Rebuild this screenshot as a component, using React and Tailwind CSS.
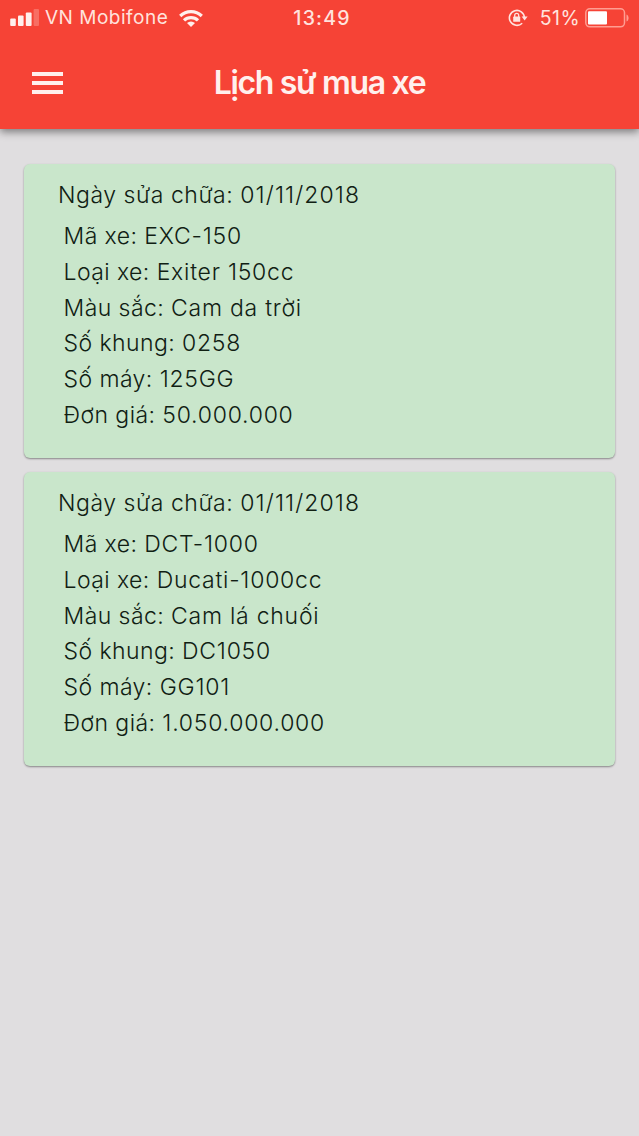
import React from 'react';

const purchases = [
  {
    date: '01/11/2018',
    details: [
      { label: 'Mã xe', value: 'EXC-150' },
      { label: 'Loại xe', value: 'Exiter 150cc' },
      { label: 'Màu sắc', value: 'Cam da trời' },
      { label: 'Số khung', value: '0258' },
      { label: 'Số máy', value: '125GG' },
      { label: 'Đơn giá', value: '50.000.000' },
    ],
  },
  {
    date: '01/11/2018',
    details: [
      { label: 'Mã xe', value: 'DCT-1000' },
      { label: 'Loại xe', value: 'Ducati-1000cc' },
      { label: 'Màu sắc', value: 'Cam lá chuối' },
      { label: 'Số khung', value: 'DC1050' },
      { label: 'Số máy', value: 'GG101' },
      { label: 'Đơn giá', value: '1.050.000.000' },
    ],
  },
];

const SignalIcon = () => (
  <svg className="w-[29px] h-[18px]" viewBox="0 0 29 18" fill="#fff0ed">
    <rect x="0.2" y="9.5" width="5.6" height="7.5" rx="1" />
    <rect x="8" y="6.5" width="5.6" height="10.5" rx="1" />
    <rect x="15.8" y="3.5" width="5.8" height="13.5" rx="1" />
    <rect x="23.6" y="0" width="5.4" height="17" rx="1" opacity="0.25" />
  </svg>
);

const WifiIcon = () => (
  <svg className="w-6 h-[17px]" viewBox="0 0 24 17" fill="none" stroke="#fff0ed" strokeWidth="3.2">
    <path d="M1.2 6a15.6 15.6 0 0 1 21.6 0" />
    <path d="M5 10.4a10 10 0 0 1 14 0" />
    <path d="M12 17l-4-4a6 6 0 0 1 8 0z" fill="#fff0ed" stroke="none" />
  </svg>
);

const RotationLockIcon = () => (
  <svg className="w-5 h-[18px]" viewBox="0 0 20 18" fill="none" stroke="#ffe3de" strokeWidth="1.6">
    <path d="M14.2 14.2a7.5 7.5 0 1 1 2.2-5.6" />
    <path d="M13.6 7.6h6l-3 4z" fill="#ffe3de" stroke="none" />
    <rect x="5.2" y="7.6" width="7" height="5.2" rx="0.6" fill="#ffe3de" stroke="none" />
    <path d="M6.7 8V6.4a2 2 0 0 1 4 0V8" strokeWidth="1.3" />
  </svg>
);

const BatteryIcon = () => (
  <svg className="w-[45px] h-5" viewBox="0 0 45 20" fill="none">
    <rect x="0.8" y="0.8" width="38.7" height="18" rx="4" stroke="#ff9d92" strokeWidth="1.5" />
    <rect x="3" y="3.2" width="19" height="13.2" rx="1" fill="#fff" />
    <path d="M41.5 6.5c2.8 1 2.8 6 0 7z" fill="#ff9d92" />
  </svg>
);

const StatusBar = () => (
  <div className="grid grid-cols-[1fr_auto_1fr] items-center h-9 pl-[10px] pr-[9px] text-[#ffe3de] leading-9">
    <div className="flex items-center">
      <SignalIcon />
      <span className="ml-[6px] text-[19px] tracking-[0.5px] whitespace-nowrap">VN Mobifone</span>
      <span className="ml-[11px]"><WifiIcon /></span>
    </div>
    <span className="pl-1 font-medium tracking-[1.2px] text-[19.5px]">13:49</span>
    <div className="flex items-center justify-end">
      <RotationLockIcon />
      <span className="ml-3 mr-[5px] text-[19.5px] tracking-[0.4px]">51%</span>
      <BatteryIcon />
    </div>
  </div>
);

const PurchaseCard = ({ date, details }) => (
  <div className="h-[294px] rounded-[6px] bg-[#c9e6cb] pt-3 shadow-[0_1px_2px_rgba(0,0,0,0.4)]">
    <h2 className="ml-[34px] h-[41px] leading-[38px] whitespace-nowrap font-[350]">
      <span className="tracking-[0.55px]">Ngày sửa chữa: </span>
      <span className="tracking-[1.1px]">{date}</span>
    </h2>
    <ul className="ml-[39.5px]">
      {details.map((item) => (
        <li key={item.label} className="h-[35.75px] leading-[38px] whitespace-nowrap">
          <span className="tracking-[0.43px]">{item.label}: </span>
          <span className="tracking-[0.75px]">{item.value}</span>
        </li>
      ))}
    </ul>
  </div>
);

const App = () => {
  return (
    <div className="w-full h-[1136px] overflow-hidden bg-[#e0dee0] font-['Inter','Noto_Sans',sans-serif]">
      <header className="relative h-[129px] bg-[#f64336] shadow-[0_3px_8px_rgba(0,0,0,0.45)]">
        <StatusBar />
        <div className="grid grid-cols-[1fr_auto_1fr] items-center h-[93px] px-8">
          <button className="flex flex-col gap-[5px] w-[31px]" aria-label="Menu">
            <span className="h-[4px] w-full bg-[#fff0ed]" />
            <span className="h-[4px] w-full bg-[#fff0ed]" />
            <span className="h-[4px] w-full bg-[#fff0ed]" />
          </button>
          <h1 className="text-[32px] font-semibold tracking-[-1.35px] text-[#fff0ed]">Lịch sử mua xe</h1>
        </div>
      </header>

      <main className="flex flex-col gap-[14px] pt-[35px] px-6 text-[23px] font-[350] text-[#102013]">
        {purchases.map((purchase, index) => (
          <PurchaseCard key={index} {...purchase} />
        ))}
      </main>
    </div>
  );
};

export default App;
